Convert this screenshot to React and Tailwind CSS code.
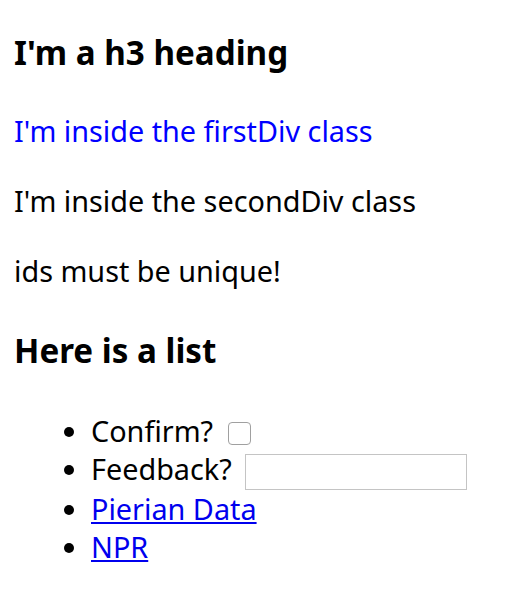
import React from 'react';

const App = () => {
  return (
    <div className="min-h-screen bg-white p-[14px] font-['Noto_Sans',sans-serif] text-[28.8px] leading-[1.34] text-black">
      <h3 className="mt-[17px] mb-[37px] text-[33.2px] font-bold leading-[1.34]">I'm a h3 heading</h3>

      <div className="firstDiv">
        <p className="my-[31px] text-[#0000ff]">I'm inside the firstDiv class</p>
      </div>
      <div className="secondDiv">
        <p className="my-[31px]">I'm inside the secondDiv class</p>
      </div>
      <p className="my-[31px]">ids must be unique!</p>

      <h3 className="mt-[39px] mb-[38px] text-[33.2px] font-bold leading-[1.34]">Here is a list</h3>

      <ul className="my-[29px] list-disc pl-[77px] leading-[38px]">
        <li>
          Confirm?{' '}
          <input
            type="checkbox"
            className="ml-[7px] h-[23px] w-[23px] appearance-none rounded-[4px] border border-[#a0a0a0] bg-white align-[-3px]"
          />
        </li>
        <li>
          Feedback?{' '}
          <input
            type="text"
            className="ml-[6px] h-[36px] w-[222px] border border-[#c4c4c4] bg-white align-middle"
          />
        </li>
        <li>
          <a href="#" className="text-[#0000ee] underline">Pierian Data</a>
        </li>
        <li>
          <a href="#" className="text-[#0000ee] underline">NPR</a>
        </li>
      </ul>
    </div>
  );
};

export default App;
